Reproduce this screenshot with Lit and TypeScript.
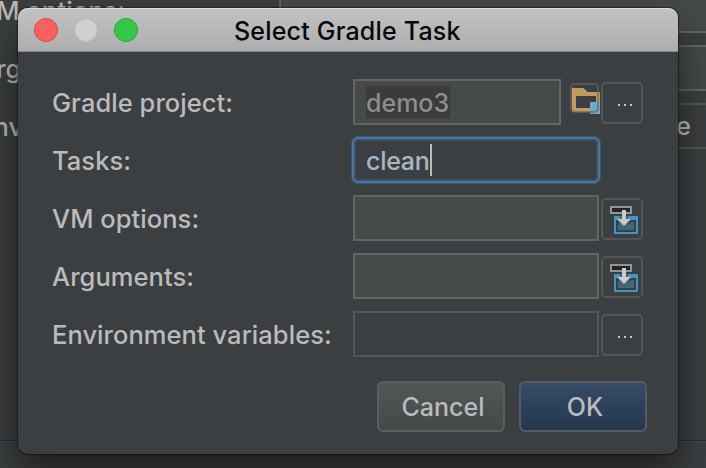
import { LitElement, html, css, svg } from "lit";
import { customElement } from "lit/decorators.js";

const folderIcon = svg`<svg class="folder" viewBox="0 0 30 32" width="30" height="32" shape-rendering="crispEdges">
  <path d="M2 5H13L17 9H30V29H2Z" fill="#c29a60"/>
  <rect x="6" y="13" width="20" height="12" fill="#3c3f41"/>
  <rect x="20" y="19" width="10" height="12" fill="#71a8cc"/>
</svg>`;

const insertIcon = svg`<svg viewBox="0 0 28 28" width="28" height="28">
  <g shape-rendering="crispEdges">
    <rect x="1" y="1" width="20" height="6" fill="#222426" stroke="#929496" stroke-width="2"/>
    <rect x="4" y="10" width="24" height="18" fill="#4593c1"/>
    <rect x="6" y="14" width="20" height="12" fill="#3c3f41"/>
    <rect x="8" y="16" width="16" height="8" fill="#41677c"/>
    <path d="M10 10H18V14H22L20 18H8L6 14H10Z" fill="#3c3f41" opacity=".55"/>
  </g>
  <path d="M12 4H16V13H21L14 20L7 13H12Z" fill="#c8c9ca"/>
</svg>`;

@customElement("app-root")
export class AppRoot extends LitElement {
  static styles = css`
    :host {
      display: block;
      position: relative;
      width: 706px;
      height: 468px;
      overflow: hidden;
      background: #3c3f41;
      color: #bbbbbb;
      font: 450 25px/47px Inter, "Liberation Sans", sans-serif;
      white-space: nowrap;
    }
    * { box-sizing: border-box; }
    .label { font-size: 25.5px; letter-spacing: .05px; line-height: 48px; }
    .back {
      display: grid;
      grid-template-columns: 301px 440px;
      grid-auto-rows: 46px;
      row-gap: 12px;
      margin: -13px 0 0 -22px;
    }
    .back .field { width: 440px; }
    .back .env { justify-content: flex-end; padding-right: 26px; line-height: 49px; }
    .rule {
      margin-top: 291px;
      height: 40px;
      border-top: 1px solid #292b2d;
      box-shadow: inset 0 1px #414b5c;
    }
    .dialog {
      position: absolute;
      left: 18px;
      top: 8px;
      width: 660px;
      height: 446px;
      border-radius: 10px;
      background: #3c3f41;
      box-shadow: 0 0 1px 1px rgba(0, 0, 0, .4), 0 20px 40px rgba(0, 0, 0, .55);
    }
    .title {
      display: grid;
      grid-template-columns: 120px 1fr;
      align-items: center;
      height: 44px;
      padding-left: 16px;
      border-radius: 10px 10px 0 0;
      background: linear-gradient(#c3c2c4, #adacae);
      box-shadow: inset 0 1px #dddcdd, inset 0 -1px #858688;
      color: #080808;
      line-height: 44px;
      letter-spacing: .2px;
    }
    .lights { display: flex; gap: 16px; }
    .light { width: 24px; height: 24px; border-radius: 50%; border: 1px solid; }
    .red { background: #fc605c; border-color: #dd4644; }
    .grey { background: #d1d0d1; border-color: #b9b8ba; }
    .green { background: #34c84a; border-color: #24a833; }
    .name { padding: 2px 0 0 80px; line-height: 42px; }
    .form { display: grid; row-gap: 12px; padding: 27px 34px 0; }
    .row { display: grid; grid-template-columns: 301px 248px 43px; height: 46px; }
    .field {
      display: flex;
      align-items: center;
      width: 246px;
      height: 46px;
      border: 2px solid #646464;
      background: #45494a;
      padding-left: 11px;
    }
    .field.off { background: #3c3f41; border-color: #555; }
    .field.short { width: 208px; }
    .sel { background: #3c3b3b; color: #8e8e8e; height: 32px; line-height: 34px; width: 84px; }
    .field.focus {
      width: 248px;
      margin-left: -1px;
      padding-left: 12px;
      border-color: #4a77a8;
      border-radius: 6px;
      background: #3c3f41;
      box-shadow: inset 0 0 0 2px #41525f, 0 0 1px 1px #3f5872;
      color: #a9b7c6;
      letter-spacing: -.3px;
      line-height: 44px;
      padding-top: 2px;
    }
    .caret { width: 2px; height: 32px; background: #bbb; margin: -2px 0 0 1px; }
    .pick { display: flex; justify-content: space-between; }
    .browse { position: relative; width: 30px; height: 31px; margin: 4px 1px 0 0; }
    .browse::after {
      content: "";
      position: absolute;
      inset: 0 1px 1px 0;
      border: 2px solid rgba(100, 100, 98, .65);
      border-radius: 5px;
    }
    .folder { display: block; }
    .btn {
      display: flex;
      align-items: center;
      justify-content: center;
      width: 42px;
      height: 42px;
      margin-top: 3px;
      border: 2px solid #535556;
      border-radius: 5px;
    }
    .btn svg { margin: 2px 0 0 4px; flex: none; }
    .dots { display: flex; gap: 4px; margin: 4px 0 0 6px; }
    .dots i { width: 2px; height: 2px; background: #c4c4c4; }
    .actions { display: flex; justify-content: flex-end; gap: 14px; padding: 24px 31px 0 0; }
    .action {
      width: 128px;
      height: 51px;
      border: 2px solid #5b5e5e;
      border-radius: 6px;
      background: linear-gradient(#525758, #434849);
      line-height: 48px;
      text-align: center;
      padding-left: 4px;
    }
    .action.ok { background: linear-gradient(#364c68, #25354e); border-color: #555b60; }
  `;

  dots = html`<div class="btn"><div class="dots"><i></i><i></i><i></i></div></div>`;
  insert = html`<div class="btn">${insertIcon}</div>`;

  render() {
    return html`
      <div class="back">
        <span class="label">VM options:</span><div class="field"></div>
        <span class="label">Arguments:</span><div class="field"></div>
        <span class="label">Environment variables:</span><div class="field off env">e</div>
      </div>
      <div class="rule"></div>
      <section class="dialog">
        <header class="title">
          <div class="lights"><div class="light red"></div><div class="light grey"></div><div class="light green"></div></div>
          <div class="name">Select Gradle Task</div>
        </header>
        <div class="form">
          <div class="row"><span class="label">Gradle project:</span>
            <div class="pick"><div class="field short"><span class="sel">demo3</span></div><div class="browse">${folderIcon}</div></div>
            ${this.dots}</div>
          <div class="row"><span class="label">Tasks:</span><div class="field focus">clean<div class="caret"></div></div></div>
          <div class="row"><span class="label">VM options:</span><div class="field"></div>${this.insert}</div>
          <div class="row"><span class="label">Arguments:</span><div class="field"></div>${this.insert}</div>
          <div class="row"><span class="label">Environment variables:</span><div class="field off"></div>${this.dots}</div>
        </div>
        <div class="actions"><div class="action">Cancel</div><div class="action ok">OK</div></div>
      </section>`;
  }
}
